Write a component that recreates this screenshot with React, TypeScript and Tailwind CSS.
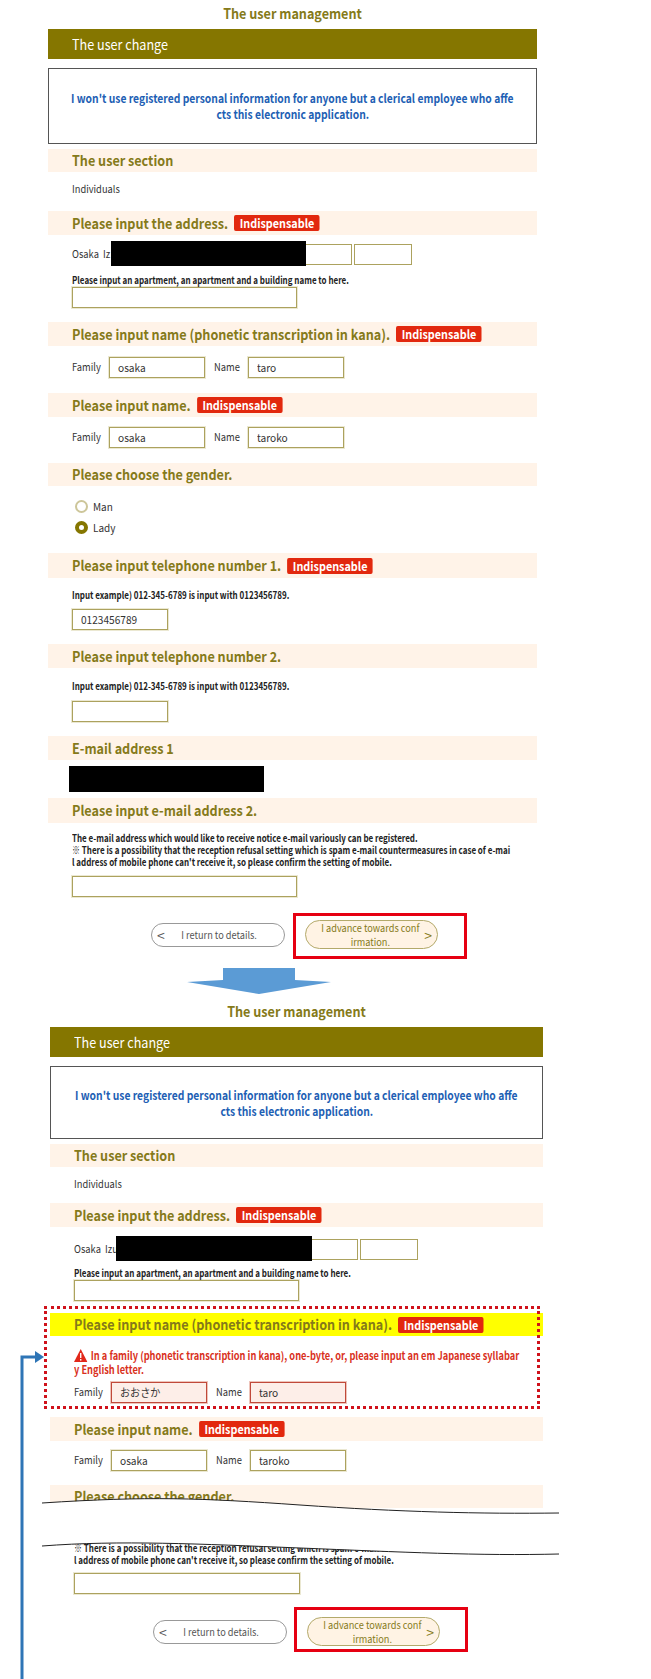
import React from 'react'

const font = { fontFamily: '"Noto Sans CJK JP", "Noto Sans", sans-serif' }

function Badge() {
  return (
    <span className="ml-[7px] inline-flex h-[16px] items-center rounded-[2px] bg-[#e2280e] px-[6px] text-[12px] font-bold text-white">
      Indispensable
    </span>
  )
}

function Head({ text, must, cls = '', warn = false }: { text: string; must?: boolean; cls?: string; warn?: boolean }) {
  return (
    <div className={`flex items-center pl-6 ${warn ? 'bg-[#ffff00]' : 'bg-[#fff3e8]'} ${cls}`}>
      <div className="flex w-max origin-left scale-x-[0.9] items-center whitespace-nowrap text-[14px] font-bold text-[#857a1a]">
        <span>{text}</span>
        {must && <Badge />}
      </div>
    </div>
  )
}

function Field({ value = '', w, error = false }: { value?: string; w: string; error?: boolean }) {
  return (
    <div className={`flex h-[21px] items-center border pl-2 text-[11px] text-[#333] ${w} ${error ? 'border-[#c0493a] bg-[#fdeee8] shadow-[0_0_0_1px_#eec4ba]' : 'border-[#aca25e] bg-white shadow-[0_0_0_1px_#ebe8d2]'}`}>
      <span className="w-max origin-left scale-x-[0.92]">{value}</span>
    </div>
  )
}

function NameRow({ family, name, cls = '', error = false }: { family: string; name: string; cls?: string; error?: boolean }) {
  return (
    <div className={`flex items-center pl-6 text-[11px] text-[#333] ${cls}`}>
      <span className="w-[37px] origin-left -translate-y-[1px] scale-x-[0.85]">Family</span>
      <Field value={family} w="w-[96px]" error={error} />
      <span className="ml-[9px] w-[34px] origin-left -translate-y-[1px] scale-x-[0.85]">Name</span>
      <Field value={name} w="w-[96px]" error={error} />
    </div>
  )
}

function Hint({ children, cls = '' }: { children: React.ReactNode; cls?: string }) {
  return (
    <div className={`pl-6 ${cls}`}>
      <p className="w-max origin-left scale-x-[0.8] whitespace-nowrap text-[10px] leading-[12px] font-bold text-[#222]">{children}</p>
    </div>
  )
}

function Top({ redactW, second = false }: { redactW: string; second?: boolean }) {
  return (
    <>
      <h1 className="h-[26px] scale-x-[0.9] text-center text-[14px] leading-[26px] font-bold text-[#857a1a]">The user management</h1>
      <div className="mt-[3px] flex h-[30px] items-center bg-[#857600] pl-6 text-[14px] text-white">
        <span className="w-max origin-left scale-x-[0.9]">The user change</span>
      </div>
      <div className={`mt-[9px] flex flex-col items-center justify-center border border-[#555] bg-white text-[12px] leading-[16px] font-bold whitespace-nowrap text-[#1e5fb4] ${second ? 'h-[73px]' : 'h-[76px]'}`}>
        <span className="scale-x-[0.86]">I won't use registered personal information for anyone but a clerical employee who affe</span>
        <span className="scale-x-[0.86]">cts this electronic application.</span>
      </div>
      <Head text="The user section" cls="mt-[5px] h-[23px]" />
      <p className="mt-[9px] pl-6 text-[10px] leading-[16px] text-[#333]">
        <span className="inline-block origin-left scale-x-[0.93]">Individuals</span>
      </p>
      <Head text="Please input the address." must cls={second ? 'mt-[11px] h-[24px]' : 'mt-[14px] h-[24px]'} />
      <div className={`relative flex h-[21px] items-center pl-6 text-[11px] text-[#333] ${second ? 'mt-[12px]' : 'mt-[9px]'}`}>
        <span className="origin-left -translate-y-[1px] scale-x-[0.85] whitespace-pre">{second ? 'Osaka  Izu' : 'Osaka  Iz'}</span>
        <div className={`absolute top-0 h-[21px] w-[64px] border border-[#aca25e] ${second ? 'left-[244px]' : 'left-[240px]'}`} />
        <div className={`absolute top-0 h-[21px] w-[58px] border border-[#aca25e] ${second ? 'left-[310px]' : 'left-[306px]'}`} />
        <div className={`absolute top-[-3px] h-[25px] bg-black ${second ? 'left-[66px]' : 'left-[63px]'} ${redactW}`} />
      </div>
      <Hint cls={second ? 'mt-[7px]' : 'mt-[9px]'}>Please input an apartment, an apartment and a building name to here.</Hint>
      <div className="mt-[1px] pl-6"><Field w="w-[225px]" /></div>
    </>
  )
}

function Buttons({ cls = '' }: { cls?: string }) {
  return (
    <div className={`flex items-center ${cls}`}>
      <div className="relative flex h-[24px] w-[134px] items-center justify-center rounded-full border border-[#999] bg-white pl-[2px] text-[10px] text-[#555]">
        <span className="absolute left-[5px] text-[14px] leading-none">&lt;</span>
        <span className="scale-x-[0.92] whitespace-nowrap">I return to details.</span>
      </div>
      <div className="relative ml-[20px] flex h-[29px] w-[133px] items-center justify-center rounded-full border border-[#b3a96a] bg-[#fff3e4] pr-[2px] text-center text-[10px] leading-[14px] text-[#857a1a]">
        <span className="scale-x-[0.92] whitespace-nowrap">I advance towards conf<br />irmation.</span>
        <span className="absolute right-[5px] text-[14px] leading-none">&gt;</span>
      </div>
    </div>
  )
}

function FormOne() {
  return (
    <section className="ml-[48px] w-[489px]">
      <Top redactW="w-[195px]" />
      <Head text="Please input name (phonetic transcription in kana)." must cls="mt-[14px] h-[24px]" />
      <NameRow family="osaka" name="taro" cls="mt-[11px]" />
      <Head text="Please input name." must cls="mt-[15px] h-[24px]" />
      <NameRow family="osaka" name="taroko" cls="mt-[10px]" />
      <Head text="Please choose the gender." cls="mt-[15px] h-[23px]" />
      <div className="mt-[10px] pl-[27px] text-[10px] text-[#333]">
        <div className="flex h-[21px] items-center">
          <span className="mr-[5px] h-[13px] w-[13px] rounded-full border-2 border-[#cdc69a] bg-white" />
          Man
        </div>
        <div className="flex h-[21px] items-center">
          <span className="mr-[5px] h-[13px] w-[13px] rounded-full border-[4px] border-[#857600] bg-white" />
          Lady
        </div>
      </div>
      <Head text="Please input telephone number 1." must cls="mt-[15px] h-[25px]" />
      <Hint cls="mt-[11px]">Input example) 012-345-6789 is input with 0123456789.</Hint>
      <div className="mt-[8px] pl-6"><Field value="0123456789" w="w-[96px]" /></div>
      <Head text="Please input telephone number 2." cls="mt-[14px] h-[24px]" />
      <Hint cls="mt-[12px]">Input example) 012-345-6789 is input with 0123456789.</Hint>
      <div className="mt-[9px] pl-6"><Field w="w-[96px]" /></div>
      <Head text="E-mail address 1" cls="mt-[14px] h-[24px]" />
      <div className="ml-[21px] mt-[6px] h-[26px] w-[195px] bg-black" />
      <Head text="Please input e-mail address 2." cls="mt-[6px] h-[25px]" />
      <Hint cls="mt-[9px]">
        The e-mail address which would like to receive notice e-mail variously can be registered.<br />
        ※ There is a possibility that the reception refusal setting which is spam e-mail countermeasures in case of e-mai<br />
        l address of mobile phone can't receive it, so please confirm the setting of mobile.
      </Hint>
      <div className="mt-[8px] pl-6"><Field w="w-[225px]" /></div>
      <Buttons cls="mt-[23px] ml-[103px]" />
    </section>
  )
}

function FormTwo() {
  return (
    <section className="ml-[50px] mt-[4px] w-[493px]">
      <Top redactW="w-[196px]" second />
      <Head text="Please input name (phonetic transcription in kana)." must warn cls="mt-[12px] h-[23px]" />
      <div className="mt-[12px] pl-6">
        <div className="w-max origin-left scale-x-[0.84] whitespace-nowrap text-[11px] font-bold text-[#d9301c]">
          <div className="flex h-[14px] items-center leading-[14px]">
            <svg className="mr-[4px] shrink-0" width="16" height="13" viewBox="0 0 16 13">
              <path d="M8 0 L16 13 H0 Z" fill="#e2281a" />
              <rect x="7.2" y="4" width="1.6" height="5" fill="#fff" />
              <rect x="7.2" y="10" width="1.6" height="1.6" fill="#fff" />
            </svg>
            In a family (phonetic transcription in kana), one-byte, or, please input an em Japanese syllabar
          </div>
          <div className="h-[14px] leading-[14px]">y English letter.</div>
        </div>
      </div>
      <NameRow family="おおさか" name="taro" cls="mt-[6px]" error />
      <Head text="Please input name." must cls="mt-[14px] h-[24px]" />
      <NameRow family="osaka" name="taroko" cls="mt-[9px]" />
      <Head text="Please choose the gender." cls="mt-[14px] h-[23px]" />
      <Hint cls="mt-[34px]">
        ※ There is a possibility that the reception refusal setting which is spam e-mail countermeasures in case of e-mai<br />
        l address of mobile phone can't receive it, so please confirm the setting of mobile.
      </Hint>
      <div className="mt-[7px] pl-6"><Field w="w-[226px]" /></div>
      <Buttons cls="mt-[23px] ml-[103px]" />
    </section>
  )
}

export default function App() {
  return (
    <div className="relative h-[1679px] w-[651px] overflow-hidden bg-white" style={font}>
      <FormOne />
      {/* arrow between the two screens */}
      <svg className="ml-[187px] mt-[19px] block" width="144" height="26" viewBox="0 0 144 26">
        <path d="M36 0 H108 V12 L144 14 L72 26 L0 14 L36 12 Z" fill="#5b9bd5" />
      </svg>
      <FormTwo />

      {/* annotations drawn over the screenshots */}
      <div className="absolute left-[293px] top-[913px] h-[46px] w-[174px] border-[3px] border-[#e60012]" />
      <div className="absolute left-[294px] top-[1607px] h-[45px] w-[174px] border-[3px] border-[#e60012]" />
      <div className="absolute left-[44px] top-[1306px] h-[103px] w-[496px] border-[3px] border-dotted border-[#d0121b]" />

      <svg className="absolute left-0 top-[1490px]" width="651" height="80" viewBox="0 0 651 80">
        <path d="M42 13 C150 6 200 8 300 15 S480 24 559 23 V64 C480 66 400 62 300 58 S120 50 42 56 Z" fill="#fff" />
        <path d="M42 13 C150 6 200 8 300 15 S480 24 559 23" fill="none" stroke="#222" strokeWidth="1" />
        <path d="M42 56 C120 50 200 54 300 58 S480 66 559 64" fill="none" stroke="#222" strokeWidth="1" />
      </svg>

      <svg className="absolute left-0 top-[1340px]" width="60" height="339" viewBox="0 0 60 339">
        <path d="M22 339 V17 H36" fill="none" stroke="#2e75b6" strokeWidth="3" />
        <path d="M35 11 L44 17 L35 23 Z" fill="#2e75b6" />
      </svg>
    </div>
  )
}
